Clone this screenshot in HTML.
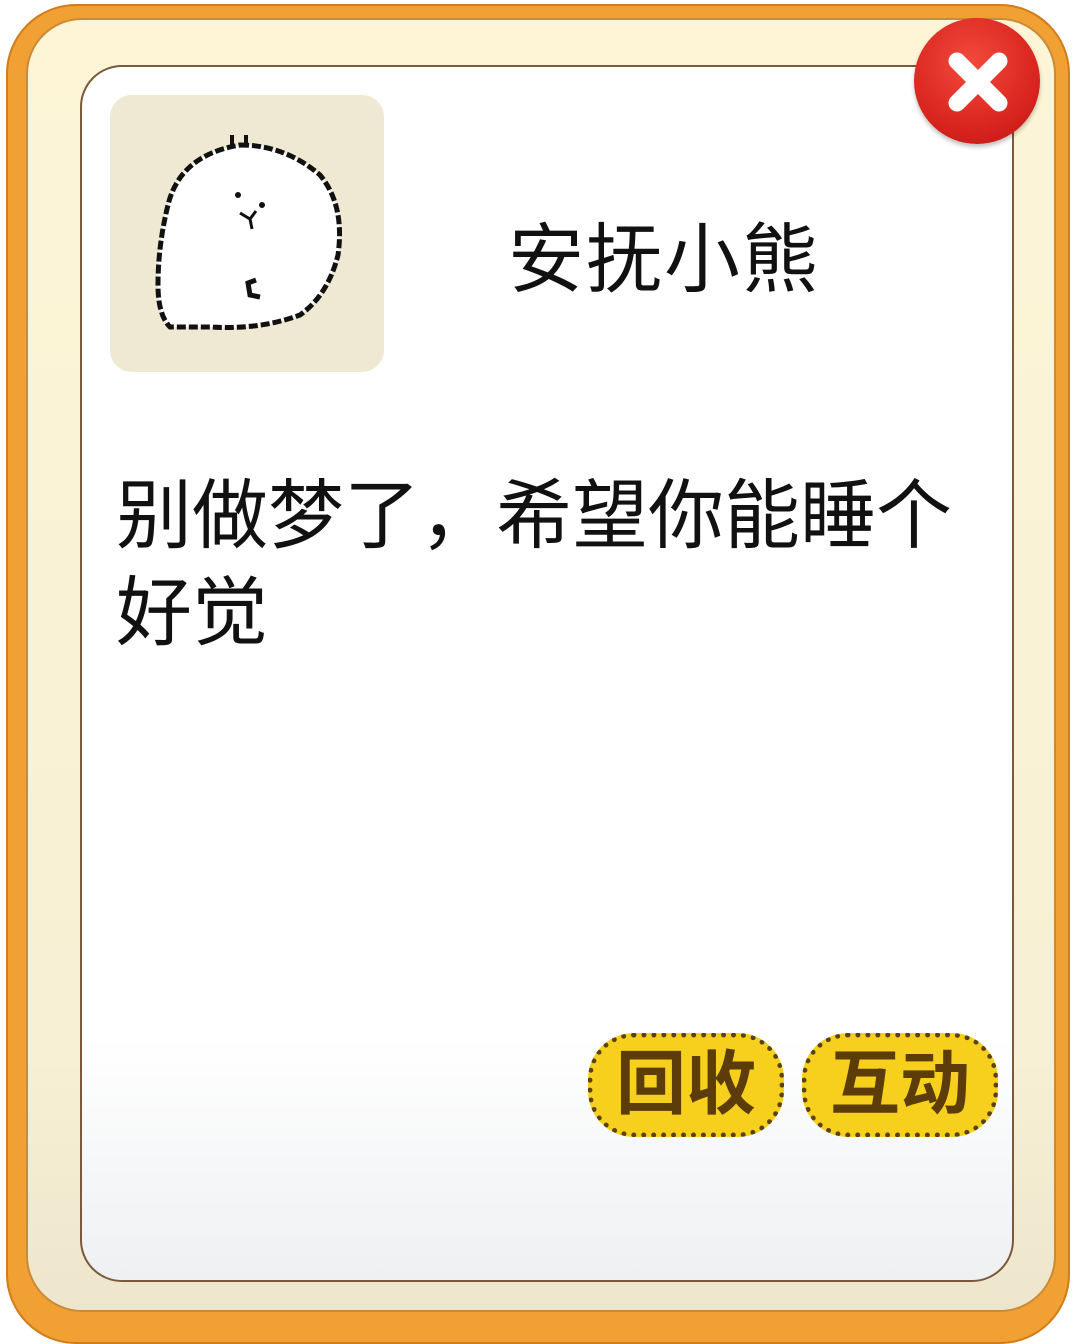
<!DOCTYPE html>
<html><head><meta charset="utf-8"><style>
body{margin:0;width:1080px;height:1326px;background:#fff;position:relative;overflow:hidden;font-family:"Liberation Sans","Noto Sans CJK SC",sans-serif}
.outer{position:absolute;left:6px;top:4px;width:1064px;height:1340px;border-radius:70px;background:#f1a033;box-shadow:inset 0 0 0 2px #d27d1c}
.cream{position:absolute;left:28px;top:20px;width:1026px;height:1290px;border-radius:54px;background:linear-gradient(#fdf5d6,#f8f0d4 80%,#ede6cd);box-shadow:0 0 0 2px #c98a3a}
.panel{position:absolute;left:80px;top:65px;width:930px;height:1213px;border-radius:42px;border:2px solid #7a5a3a;background:linear-gradient(#fff 0%,#fff 80%,#eef0f2 100%)}
.img{position:absolute;left:110px;top:95px;width:274px;height:277px;border-radius:22px;background:#efe8d2}
.title{position:absolute;left:508px;top:198px;font-size:76px;color:#111;letter-spacing:2px}
.body{position:absolute;left:116px;top:468px;width:900px;font-size:76px;line-height:97px;color:#111}
.btn{position:absolute;top:1033px;width:196px;height:104px;border-radius:46px;background:#f6d01c;border:5px dotted #5a4312;box-sizing:border-box;color:#5c3d0a;font-size:70px;font-weight:bold;text-align:center;line-height:92px}
.close{position:absolute;left:914px;top:18px;width:126px;height:126px;border-radius:50%;background:radial-gradient(circle at 45% 35%,#f24a3c,#d8231e 65%,#b3140f);box-shadow:0 3px 4px rgba(0,0,0,.25)}
</style></head><body>
<div class="outer"></div>
<div class="cream"></div>
<div class="panel"></div>
<div class="img"></div>
<svg style="position:absolute;left:110px;top:95px" width="274" height="277" viewBox="0 0 274 277">
<path d="M130 50 Q175 50 210 80 Q235 110 228 160 Q218 200 190 220 Q150 235 100 232 L60 232 Q48 220 48 190 Q48 150 58 110 Q70 60 130 50Z" fill="#fff" stroke="#111" stroke-width="5" stroke-dasharray="9 3"/>
<circle cx="128" cy="100" r="3" fill="#111"/><circle cx="152" cy="110" r="3" fill="#111"/>
<path d="M130 118 L140 124 L146 116 M140 124 L142 134" stroke="#111" stroke-width="3" fill="none"/>
<path d="M146 185 L138 188 L140 200 L150 202" stroke="#111" stroke-width="5" fill="none"/>
<path d="M122 40 V52 M136 40 V52" stroke="#111" stroke-width="4"/>
</svg>
<div class="title">安抚小熊</div>
<div class="body">别做梦了，希望你能睡个<br>好觉</div>
<div class="btn" style="left:588px">回收</div>
<div class="btn" style="left:802px">互动</div>
<div class="close"></div>
<svg style="position:absolute;left:914px;top:18px" width="126" height="126" viewBox="0 0 126 126">
<path d="M43 43 L85 85 M85 43 L43 85" stroke="#fff" stroke-width="17" stroke-linecap="round"/>
</svg>
</body></html>
